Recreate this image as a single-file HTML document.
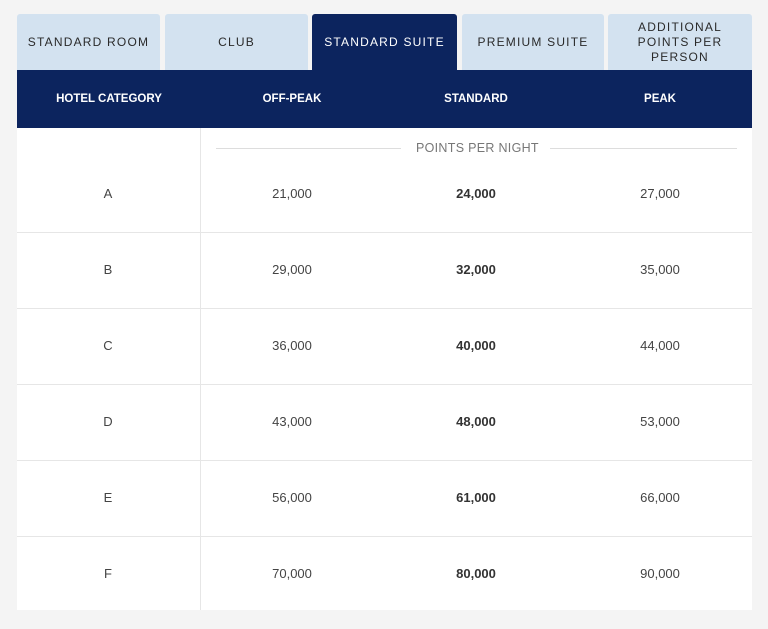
<!DOCTYPE html>
<html><head><style>
*{margin:0;padding:0;box-sizing:border-box}
body{width:768px;height:629px;background:#f4f4f4;font-family:"Liberation Sans",sans-serif;position:relative;overflow:hidden}
.tab{position:absolute;top:14px;height:56px;background:#d3e2f0;border-radius:3px 3px 0 0;display:flex;align-items:center;justify-content:center;text-align:center;font-size:12px;letter-spacing:1.2px;color:#2a2a2a;line-height:15px}
.tab.act{background:#0c245e;color:#fff}
.head{position:absolute;left:17px;top:70px;width:735px;height:58px;background:#0c245e;color:#fff;font-size:11.5px;font-weight:bold}
.head span,.row span{position:absolute;transform:translateX(-50%);white-space:nowrap}
.head span{top:23px}
.body{position:absolute;left:17px;top:128px;width:735px;height:482px;background:#fff}
.vl{position:absolute;left:183px;top:0;width:1px;height:482px;background:#e6e6e6}
.row{position:absolute;left:0;width:735px;font-size:13px;color:#444}
.row.b{border-top:1px solid #e6e6e6}
.row span.bd{font-weight:bold;color:#333}
.ppn{position:absolute;top:12px;left:199px;width:521px;height:16px}
.ppn .l{position:absolute;top:8px;height:1px;background:#ddd}
.ppn .t{position:absolute;left:200px;top:1px;font-size:12.5px;color:#777;letter-spacing:.3px}
</style></head><body>
<div class="tab" style="left:17px;width:143px">STANDARD ROOM</div>
<div class="tab" style="left:165px;width:143px">CLUB</div>
<div class="tab act" style="left:312px;width:145px">STANDARD SUITE</div>
<div class="tab" style="left:462px;width:142px">PREMIUM SUITE</div>
<div class="tab" style="left:608px;width:144px">ADDITIONAL<br>POINTS PER<br>PERSON</div>
<div class="head">
<span style="left:92px">HOTEL CATEGORY</span><span style="left:275px">OFF-PEAK</span><span style="left:459px">STANDARD</span><span style="left:643px">PEAK</span>
</div>
<div class="body">
<div class="vl"></div>
<div class="ppn"><div class="l" style="left:0;width:185px"></div><div class="t">POINTS PER NIGHT</div><div class="l" style="left:334px;width:187px"></div></div>
<div class="row" style="top:58px"><span style="left:91px">A</span><span style="left:275px">21,000</span><span class="bd" style="left:459px">24,000</span><span style="left:643px">27,000</span></div>
<div class="row b" style="top:104px;height:76px"><span style="left:91px;top:29px">B</span><span style="left:275px;top:29px">29,000</span><span class="bd" style="left:459px;top:29px">32,000</span><span style="left:643px;top:29px">35,000</span></div>
<div class="row b" style="top:180px;height:76px"><span style="left:91px;top:29px">C</span><span style="left:275px;top:29px">36,000</span><span class="bd" style="left:459px;top:29px">40,000</span><span style="left:643px;top:29px">44,000</span></div>
<div class="row b" style="top:256px;height:76px"><span style="left:91px;top:29px">D</span><span style="left:275px;top:29px">43,000</span><span class="bd" style="left:459px;top:29px">48,000</span><span style="left:643px;top:29px">53,000</span></div>
<div class="row b" style="top:332px;height:76px"><span style="left:91px;top:29px">E</span><span style="left:275px;top:29px">56,000</span><span class="bd" style="left:459px;top:29px">61,000</span><span style="left:643px;top:29px">66,000</span></div>
<div class="row b" style="top:408px;height:74px"><span style="left:91px;top:29px">F</span><span style="left:275px;top:29px">70,000</span><span class="bd" style="left:459px;top:29px">80,000</span><span style="left:643px;top:29px">90,000</span></div>
</div>
</body></html>
